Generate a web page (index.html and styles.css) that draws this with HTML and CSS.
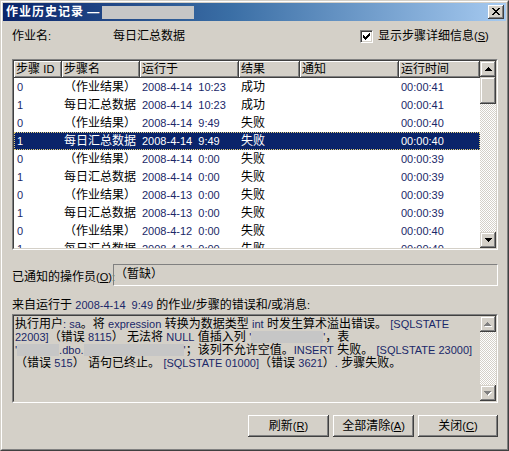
FILE: index.html
```html
<!DOCTYPE html>
<html lang="zh-CN">
<head>
<meta charset="utf-8">
<title>作业历史记录</title>
<link rel="stylesheet" href="styles.css">
</head>
<body>
<div class="win">
  <div class="frame">
    <div class="title">
      <span class="title-text"><span class="title-cjk">作业历史记录</span> —</span><span class="title-redact"></span>
      <span class="close"><svg width="8" height="7" viewBox="0 0 8 7" shape-rendering="crispEdges"><path fill="#000" d="M0 0h2v1h-2zM6 0h2v1h-2zM1 1h2v1h-2zM5 1h2v1h-2zM2 2h4v1h-4zM3 3h2v1h-2zM2 4h4v1h-4zM1 5h2v1h-2zM5 5h2v1h-2zM0 6h2v1h-2zM6 6h2v1h-2z"/></svg></span>
    </div>
    <div class="body">
      <div class="row-job">
        <span class="lbl">作业名<span class="n">:</span></span>
        <span class="job-name">每日汇总数据</span>
        <span class="chk">
          <span class="chk-box"><svg width="7" height="7" viewBox="0 0 7 7" shape-rendering="crispEdges"><path fill="#000" d="M6 0h1v1h-1zM5 1h2v1h-2zM0 2h1v1h-1zM4 2h3v1h-3zM0 3h2v1h-2zM3 3h3v1h-3zM0 4h5v1h-5zM1 5h3v1h-3zM2 6h1v1h-1z"/></svg></span>
          <span class="chk-text">显示步骤详细信息<span class="n">(<u>S</u>)</span></span>
        </span>
      </div>

      <div class="list">
        <div class="list-in">
          <div class="lv">
            <div class="grid hdr">
              <div class="hc">步骤 <span class="n">ID</span></div>
              <div class="hc">步骤名</div>
              <div class="hc">运行于</div>
              <div class="hc">结果</div>
              <div class="hc">通知</div>
              <div class="hc">运行时间</div>
            </div>
            <div class="rows">
              <div class="grid r"><div class="c id n">0</div><div class="c">（作业结果）</div><div class="c n dt">2008-4-14  10:23</div><div class="c">成功</div><div class="c"></div><div class="c n">00:00:41</div></div>
              <div class="grid r"><div class="c id n">1</div><div class="c">每日汇总数据</div><div class="c n dt">2008-4-14  10:23</div><div class="c">成功</div><div class="c"></div><div class="c n">00:00:41</div></div>
              <div class="grid r"><div class="c id n">0</div><div class="c">（作业结果）</div><div class="c n dt">2008-4-14  9:49</div><div class="c">失败</div><div class="c"></div><div class="c n">00:00:40</div></div>
              <div class="grid r sel"><div class="c id n">1</div><div class="c">每日汇总数据</div><div class="c n dt">2008-4-14  9:49</div><div class="c">失败</div><div class="c"></div><div class="c n">00:00:40</div></div>
              <div class="grid r"><div class="c id n">0</div><div class="c">（作业结果）</div><div class="c n dt">2008-4-14  0:00</div><div class="c">失败</div><div class="c"></div><div class="c n">00:00:39</div></div>
              <div class="grid r"><div class="c id n">1</div><div class="c">每日汇总数据</div><div class="c n dt">2008-4-14  0:00</div><div class="c">失败</div><div class="c"></div><div class="c n">00:00:39</div></div>
              <div class="grid r"><div class="c id n">0</div><div class="c">（作业结果）</div><div class="c n dt">2008-4-13  0:00</div><div class="c">失败</div><div class="c"></div><div class="c n">00:00:39</div></div>
              <div class="grid r"><div class="c id n">1</div><div class="c">每日汇总数据</div><div class="c n dt">2008-4-13  0:00</div><div class="c">失败</div><div class="c"></div><div class="c n">00:00:39</div></div>
              <div class="grid r"><div class="c id n">0</div><div class="c">（作业结果）</div><div class="c n dt">2008-4-12  0:00</div><div class="c">失败</div><div class="c"></div><div class="c n">00:00:40</div></div>
              <div class="grid r"><div class="c id n">1</div><div class="c">每日汇总数据</div><div class="c n dt">2008-4-12  0:00</div><div class="c">失败</div><div class="c"></div><div class="c n">00:00:40</div></div>
            </div>
          </div>
          <div class="sb">
            <div class="sbtn"><svg width="7" height="4" viewBox="0 0 7 4" shape-rendering="crispEdges"><path fill="#000" d="M3 0h1v1h-1zM2 1h3v1h-3zM1 2h5v1h-5zM0 3h7v1h-7z"/></svg></div>
            <div class="thumb"></div>
            <div class="track"></div>
            <div class="sbtn"><svg width="7" height="4" viewBox="0 0 7 4" shape-rendering="crispEdges"><path fill="#000" d="M0 0h7v1h-7zM1 1h5v1h-5zM2 2h3v1h-3zM3 3h1v1h-1z"/></svg></div>
          </div>
        </div>
      </div>

      <div class="row-op">
        <span class="lbl op-lbl">已通知的操作员<span class="n">(<u>O</u>):</span></span>
        <div class="op-box">（暂缺）</div>
      </div>

      <div class="msg-lbl">来自运行于 <span class="n dt">2008-4-14  9:49</span> 的作业/步骤的错误和/或消息<span class="n">:</span></div>

      <div class="err">
        <div class="err-in">
          <div class="err-text">执行用户<span class="n">: sa</span>。将 <span class="n">expression</span> 转换为数据类型 <span class="n">int</span> 时发生算术溢出错误。 <span class="n">[SQLSTATE</span><br><span class="n">22003]</span>（错误 <span class="n">8115</span>） 无法将 <span class="n">NULL</span> 值插入列 <span class="n">'</span><span class="redact w1"></span><span class="n">'</span>，表<br><span class="n">'</span><span class="redact w2"></span><span class="n">.dbo.</span><span class="redact w3"></span><span class="n">'</span>；该列不允许空值。<span class="n">INSERT</span> 失败。 <span class="n">[SQLSTATE 23000]</span><br>（错误 <span class="n">515</span>） 语句已终止。 <span class="n">[SQLSTATE 01000]</span>（错误 <span class="n">3621</span>）<span class="n">.</span> 步骤失败。</div>
          <div class="sb">
            <div class="sbtn"><svg width="8" height="5" viewBox="0 0 8 5" shape-rendering="crispEdges"><path fill="#fff" d="M4 1h1v1h-1zM3 2h3v1h-3zM2 3h5v1h-5zM1 4h7v1h-7z"/><path fill="#808080" d="M3 0h1v1h-1zM2 1h3v1h-3zM1 2h5v1h-5zM0 3h7v1h-7z"/></svg></div>
            <div class="track"></div>
            <div class="sbtn"><svg width="8" height="5" viewBox="0 0 8 5" shape-rendering="crispEdges"><path fill="#fff" d="M1 1h7v1h-7zM2 2h5v1h-5zM3 3h3v1h-3zM4 4h1v1h-1z"/><path fill="#808080" d="M0 0h7v1h-7zM1 1h5v1h-5zM2 2h3v1h-3zM3 3h1v1h-1z"/></svg></div>
          </div>
        </div>
      </div>

      <div class="btns">
        <div class="btn w81">刷新<span class="n">(<u>R</u>)</span></div>
        <div class="btn w81">全部清除<span class="n">(<u>A</u>)</span></div>
        <div class="btn w80">关闭<span class="n">(<u>C</u>)</span></div>
      </div>
    </div>
  </div>
</div>
</body>
</html>
```

FILE: styles.css
```css
* { box-sizing: border-box; }
html, body { margin: 0; padding: 0; }
body {
  width: 509px;
  height: 451px;
  overflow: hidden;
  background: #d4d0c8;
  color: #000;
  font-family: "Liberation Sans", "Noto Sans CJK SC", sans-serif;
  font-size: 12px;
  line-height: 14px;
}
.n { font-size: 11px; color: #1a2868; }
u { text-decoration: underline; }

.win {
  width: 509px;
  height: 451px;
  border: 1px solid;
  border-color: #d4d0c8 #404040 #404040 #d4d0c8;
  background: #d4d0c8;
}
.frame {
  height: 100%;
  border: 1px solid;
  border-color: #fff #808080 #808080 #fff;
  padding: 1px;
  display: flex;
  flex-direction: column;
}

/* title bar */
.title {
  height: 18px;
  flex: none;
  display: flex;
  align-items: center;
  padding-left: 3px;
  background: linear-gradient(to right, #0a246a 0%, #3a6ea5 45%, #a6caf0 100%);
  color: #fff;
  font-weight: bold;
}
.title-text { line-height: 18px; white-space: nowrap; }
.title-cjk { letter-spacing: 1px; }
.title-redact {
  width: 92px;
  height: 13px;
  margin-left: 3px;
  background: #c6c6c6;
}
.close {
  margin-left: auto;
  margin-right: 2px;
  width: 16px;
  height: 14px;
  display: flex;
  align-items: center;
  justify-content: center;
  background: #d4d0c8;
  box-shadow: inset -1px -1px #404040, inset 1px 1px #fff, inset -2px -2px #808080;
}
.close svg { display: block; margin: 0 1px 1px 0; }

/* body */
.body {
  flex: 1;
  display: flex;
  flex-direction: column;
  padding: 8px 8px 11px 9px;
}
.lbl { width: 101px; flex: none; white-space: nowrap; }
.lbl .n, .msg-lbl > .n:last-child { color: #000; }

.row-job {
  height: 14px;
  display: flex;
  align-items: center;
  white-space: nowrap;
}
.job-name { width: 247px; flex: none; }
.chk { display: flex; align-items: center; }
.chk-box {
  width: 13px;
  height: 13px;
  border: 1px solid;
  border-color: #808080 #fff #fff #808080;
  box-shadow: inset 1px 1px #404040, inset -1px -1px #d4d0c8;
  background: #fff;
  display: flex;
  align-items: center;
  justify-content: center;
}
.chk-box svg { display: block; }
.chk-text { margin-left: 5px; }
.chk-text .n { color: #000; }

/* list view */
.list {
  margin-top: 16px;
  height: 191px;
  flex: none;
  border: 1px solid;
  border-color: #808080 #fff #fff #808080;
}
.list-in {
  height: 100%;
  display: flex;
  border: 1px solid;
  border-color: #404040 #d4d0c8 #d4d0c8 #404040;
  background: #fff;
}
.lv { flex: 1; overflow: hidden; display: flex; flex-direction: column; }
.grid {
  display: grid;
  grid-template-columns: 48px 78px 99px 61px 99px 81px;
}
.hdr { height: 17px; flex: none; }
.hc {
  height: 17px;
  line-height: 17px;
  padding-left: 2px;
  background: #d4d0c8;
  white-space: nowrap;
  overflow: hidden;
  box-shadow: inset -1px -1px #404040, inset 1px 1px #fff, inset -2px -2px #808080;
}
.hc .n { color: #000; }
.rows { flex: 1; overflow: hidden; }
.r { height: 18px; }
.c {
  height: 18px;
  line-height: 18px;
  padding-left: 2px;
  white-space: nowrap;
  overflow: hidden;
}
.c.id { padding-left: 3px; }
.dt { white-space: pre; }
.sel {
  background: #0a246a;
  color: #fff;
  outline: 1px dotted #e6d27a;
  outline-offset: -1px;
}
.sel .n { color: #fff; }

/* scrollbars */
.sb {
  width: 16px;
  flex: none;
  display: flex;
  flex-direction: column;
}
.sbtn, .thumb {
  background: #d4d0c8;
  box-shadow: inset -1px -1px #404040, inset 1px 1px #d4d0c8, inset -2px -2px #808080, inset 2px 2px #fff;
}
.sbtn {
  height: 16px;
  flex: none;
  display: flex;
  align-items: center;
  justify-content: center;
}
.sbtn svg { display: block; }
.thumb { height: 27px; flex: none; }
.track {
  flex: 1;
  background: repeating-conic-gradient(#fff 0 25%, #d4d0c8 0 50%) 0 0 / 2px 2px;
}

/* notified operator */
.row-op {
  margin-top: 14px;
  height: 22px;
  flex: none;
  display: flex;
}
.op-lbl { margin-top: 6px; }
.op-box {
  flex: 1;
  height: 22px;
  border: 1px solid;
  border-color: #808080 #fff #fff #808080;
  padding: 2px 0 0 1px;
  white-space: nowrap;
}

.msg-lbl {
  margin-top: 12px;
  height: 14px;
  flex: none;
  white-space: nowrap;
}

/* error text */
.err {
  margin-top: 2px;
  height: 89px;
  flex: none;
  border: 1px solid;
  border-color: #808080 #fff #fff #808080;
}
.err-in {
  height: 100%;
  display: flex;
  border: 1px solid;
  border-color: #404040 #d4d0c8 #d4d0c8 #404040;
  background: #d4d0c8;
}
.err-text {
  flex: 1;
  padding: 2px 0 0 1px;
  line-height: 13px;
  white-space: nowrap;
  overflow: hidden;
}
.redact {
  display: inline-block;
  height: 12px;
  vertical-align: -2px;
  background: #c6c6c6;
}
.w1 { width: 72px; }
.w2 { width: 42px; }
.w3 { width: 100px; }

/* buttons */
.btns {
  margin-top: 12px;
  display: flex;
  justify-content: flex-end;
  gap: 4px;
  flex: none;
}
.btn {
  height: 22px;
  line-height: 22px;
  text-align: center;
  white-space: nowrap;
  background: #d4d0c8;
  box-shadow: inset -1px -1px #404040, inset 1px 1px #fff, inset -2px -2px #808080;
}
.btn .n { color: #000; }
.w81 { width: 81px; }
.w80 { width: 80px; }
```
